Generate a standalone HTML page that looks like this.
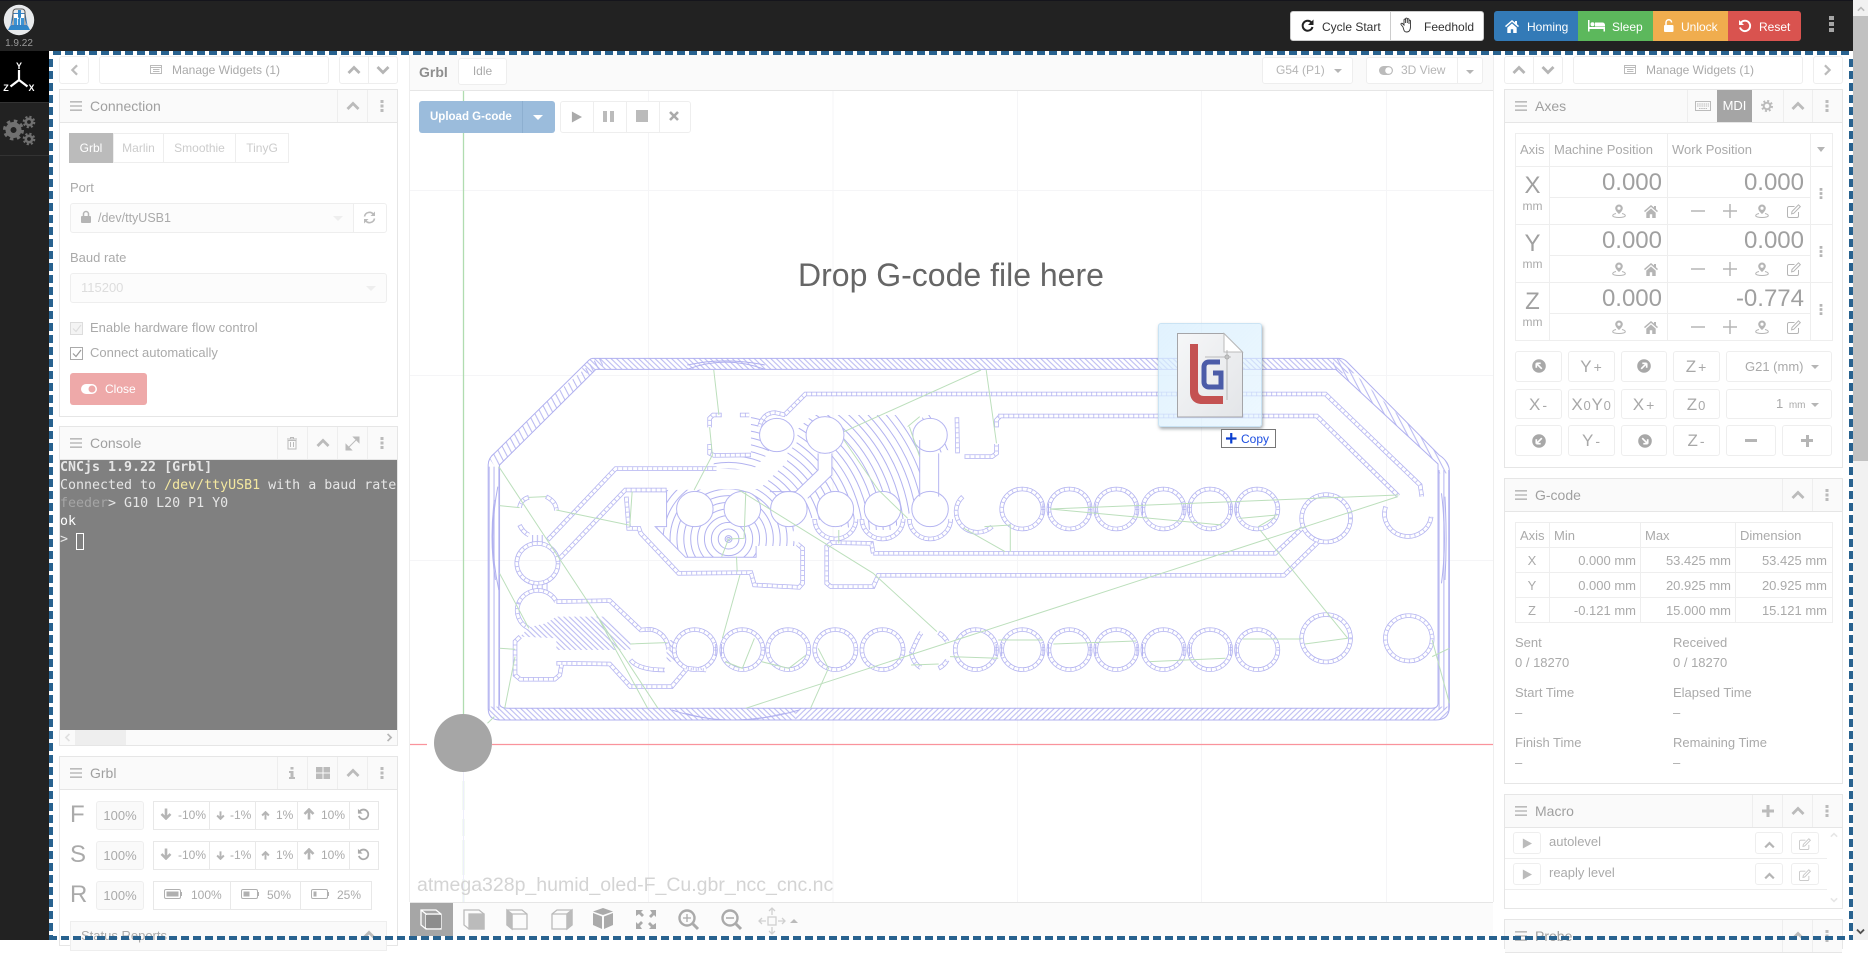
<!DOCTYPE html>
<html><head><meta charset="utf-8"><title>CNCjs</title>
<style>
html,body{margin:0;padding:0;width:1868px;height:940px;overflow:hidden;background:#fff;font:13px/16px "Liberation Sans",Arial,sans-serif;color:#aaa}
*{box-sizing:border-box}
.a{position:absolute}
.t{position:absolute;white-space:nowrap;line-height:16px;height:16px;transform:translateY(1px)}
.b{position:absolute;background:#fff;border:1px solid #eee;border-radius:3px;text-align:center;white-space:nowrap}
.w{position:absolute;border:1px solid #e6e6e6;background:#fff}
.h{position:absolute;left:0;right:0;top:0;height:33px;background:#fafafa;border-bottom:1px solid #e6e6e6}
.v{position:absolute;top:0;width:1px;height:32px;background:#eee}
.i{position:absolute;color:#b5b5b5;overflow:visible}
.l{position:absolute;background:#e9e9e9}
.ttl{position:absolute;left:30px;top:8px;font-size:14px;line-height:16px;color:#a0a0a0}
.ns,.ns *,#strips *,#pads *{vector-effect:non-scaling-stroke}
.st{fill:none}
.s1{stroke:#b2b2f0;stroke-width:4.500;fill:none}
.s2{stroke:#fff;stroke-width:3;fill:none}
.s3{stroke:#c4c4f4;stroke-width:3;fill:none;stroke-dasharray:1 4}
small{font-size:13px}
.term{position:absolute;left:60px;top:460px;width:337px;height:270px;background:#808080;overflow:hidden;font:13.3px/18px "DejaVu Sans Mono","Liberation Mono",monospace;color:#e6e6e6;white-space:pre}
.jt{font-size:17px;line-height:29px;color:#a8a8a8;letter-spacing:1px}
.jt i{font-style:normal;font-size:14px;margin-left:1px}
.cell{position:absolute;font-size:13px;line-height:16px;white-space:nowrap;color:#aaa;transform:translateY(1px)}
</style></head><body>
<svg width="0" height="0" style="position:absolute">
<defs>
<symbol id="up" viewBox="0 0 14 10"><path d="M1.500 8L7 2.500 12.500 8" fill="none" stroke="currentColor" stroke-width="2.800"/></symbol>
<symbol id="dn" viewBox="0 0 14 10"><path d="M1.500 2L7 7.500 12.500 2" fill="none" stroke="currentColor" stroke-width="2.800"/></symbol>
<symbol id="lf" viewBox="0 0 10 14"><path d="M8 1.500L2.500 7 8 12.500" fill="none" stroke="currentColor" stroke-width="2.600"/></symbol>
<symbol id="rt" viewBox="0 0 10 14"><path d="M2 1.500L7.500 7 2 12.500" fill="none" stroke="currentColor" stroke-width="2.600"/></symbol>
<symbol id="menu" viewBox="0 0 12 10"><path d="M0 0h12v1.600H0zM0 4.200h12v1.600H0zM0 8.400h12V10H0z" fill="currentColor"/></symbol>
<symbol id="dots" viewBox="0 0 4 12"><path d="M.5 0h3v3h-3zM.5 4.500h3v3h-3zM.5 9h3v3h-3z" fill="currentColor"/></symbol>
<symbol id="list" viewBox="0 0 12 9"><path d="M.5.5h11v8H.5z" fill="none" stroke="currentColor"/><path d="M.5 2.500h11M3 4.500h6.500M3 6.500h6.500" stroke="currentColor"/></symbol>
<symbol id="pin" viewBox="0 0 14 14"><path d="M7 .5a3.800 3.800 0 0 1 3.800 3.800C10.800 7 7 10 7 10S3.200 7 3.200 4.300A3.800 3.800 0 0 1 7 .5z" fill="currentColor"/><circle cx="7" cy="4.200" r="1.600" fill="#fff"/><path d="M4 9.500C1.800 10 .7 11 .7 11.700c0 1 2.800 1.800 6.300 1.800s6.300-.8 6.300-1.800c0-.7-1.100-1.700-3.300-2.200" fill="none" stroke="currentColor"/></symbol>
<symbol id="home" viewBox="0 0 14 13"><path d="M7 0L0 6l1 1.100 6-5.200 6 5.200L14 6l-2-1.800V1h-2v1.500zM2.300 7.600V13h3.500V9.200h2.400V13h3.500V7.600L7 3.500z" fill="currentColor"/></symbol>
<symbol id="edit" viewBox="0 0 14 14"><path d="M11 8v4a1.500 1.500 0 0 1-1.500 1.500h-8A1.500 1.500 0 0 1 0 12V4a1.500 1.500 0 0 1 1.500-1.500H7" fill="none" stroke="currentColor" transform="translate(.5 0)"/><path d="M5 7.500L11.500.8l1.800 1.800L6.700 9.300 4.600 9.800z" fill="none" stroke="currentColor"/></symbol>
<symbol id="cir" viewBox="0 0 14 14"><circle cx="7" cy="7" r="6.800" fill="currentColor"/><path d="M4.300 4.300h4.400M4.300 4.300v4.400M4.300 4.300l5.500 5.500" stroke="#fff" stroke-width="1.700" fill="none"/></symbol>
<symbol id="ad" viewBox="0 0 12 12"><path d="M6 .5v10M1.500 6L6 10.500 10.500 6" fill="none" stroke="currentColor" stroke-width="2.600"/></symbol>
<symbol id="au" viewBox="0 0 12 12"><path d="M6 11.500v-10M1.500 6L6 1.500 10.500 6" fill="none" stroke="currentColor" stroke-width="2.600"/></symbol>
<symbol id="undo" viewBox="0 0 14 14"><path d="M3 3.500A5.200 5.200 0 1 1 2 8.500" fill="none" stroke="currentColor" stroke-width="1.900"/><path d="M1 1v5h5z" fill="currentColor"/></symbol>
<symbol id="play" viewBox="0 0 12 12"><path d="M1 0l11 6-11 6z" fill="currentColor"/></symbol>
</defs>
</svg>

<!-- canvas -->
<svg class="a" style="left:0;top:0" width="1868" height="940">
<defs>
<pattern id="ha" width="16" height="16" patternUnits="userSpaceOnUse"><path d="M0 0L16 16M-16 0L16 32M0-16L32 16" stroke="#b8b8f1" stroke-width="3" fill="none"/></pattern>
<pattern id="hb" width="16" height="16" patternUnits="userSpaceOnUse"><path d="M16 0L0 16M32 0L0 32M16-16L-16 16" stroke="#b8b8f1" stroke-width="3" fill="none"/></pattern>
<pattern id="hc" width="18" height="36" patternUnits="userSpaceOnUse"><path d="M0 0L18 36M-18 0L18 72M18 0L36 36" stroke="#b8b8f1" stroke-width="3" fill="none"/></pattern>
<pattern id="hd" width="18" height="36" patternUnits="userSpaceOnUse"><path d="M0 0L18 36M-18 0L18 72M18 0L36 36" stroke="#b8b8f1" stroke-width="3" fill="none"/></pattern>
<pattern id="hv" width="14" height="60" patternUnits="userSpaceOnUse"><path d="M6 0V60" stroke="#b8b8f1" stroke-width="3" fill="none"/></pattern>
<clipPath id="band"><path clip-rule="evenodd" d="M530 55L2698 55Q2710 55 2720 65L2988 345Q3018 365 3018 395L3018 1100Q3018 1140 2978 1140L260 1140Q227 1140 227 1105L227 375Q227 355 245 340L520 60Q525 55 530 55ZM540 88L260 375L260 1090Q260 1105 285 1105L2965 1105Q2985 1105 2985 1090L2985 372L2688 88Z"/></clipPath>
<clipPath id="conc"><path d="M745 450L1015 447L1095 365L1095 340L1125 305L1125 268L1168 225L1410 225L1480 300L1480 258L1490 225L1590 225L1588 340L1560 330L1535 340L1535 470L1480 470L1460 510L1400 570L1340 570L1250 560L1190 540L1150 530L1120 560L1105 590L1110 600L1135 618L1005 618L1005 652L800 652L713 563L745 563ZM990 228L1025 232L1060 270L1040 340L995 390L880 385L885 348L990 345Z"/></clipPath>
<g id="strips">
<path d="M400 600L597 386L890 386"/>
<path d="M1088 224L1148 162L2658 162L2933 435L2938 470"/>
<path d="M1708 228L2633 228L2870 468"/>
<path d="M1345 640L2513 640L2590 565"/>
<path d="M1345 640L1340 610L1225 608L1210 620L1210 730L1222 740L1345 740L1360 706L2538 706L2638 605"/>
<path d="M435 655L625 450L745 450"/>
<path d="M628 470L635 565L665 565L670 580L780 700L990 698L1000 735L1130 742L1140 730L1140 625L1125 612"/>
<path d="M425 785L580 782L670 870L700 868"/>
<path d="M425 970L580 972L640 1040L760 1040L805 985L860 990"/>
<path d="M320 890L305 905L305 1005L320 1018L420 1018L435 1005L440 975"/>
<path d="M905 225L880 225L870 235L870 262M870 312L870 340L882 346L990 345M958 225L985 225"/>
<path d="M345 472C325 478 320 490 318 503M395 470C415 480 425 495 425 512M318 555C325 570 335 580 345 585"/>
<path d="M1588 232L1590 340M1610 350L1690 350L1703 340L1703 312M1703 262L1703 240L1712 230"/>
<path d="M1090 225L1060 218C1035 218 1020 235 1015 260"/>
<path d="M2833 500A68 68 0 1 0 2965 530"/>
<path d="M1175 537A60 60 0 0 0 1295 537M1312 537A60 60 0 0 0 1432 537M1450 537A60 60 0 0 0 1570 537"/>
<circle cx="2660" cy="535" r="71"/><circle cx="2660" cy="895" r="71"/><circle cx="2900" cy="895" r="68"/>
<circle cx="370" cy="670" r="60"/><path d="M315 790A60 60 0 0 0 345 865M315 790A60 60 0 0 1 425 785"/>
<circle cx="1778" cy="507" r="60"/><circle cx="1915" cy="507" r="60"/><circle cx="2051" cy="507" r="60"/><circle cx="2188" cy="507" r="60"/><circle cx="2323" cy="507" r="60"/><circle cx="2460" cy="507" r="60"/>
<path d="M1605 470A60 60 0 0 0 1690 560"/>
<circle cx="827" cy="929" r="60"/><circle cx="965" cy="929" r="60"/><circle cx="1098" cy="929" r="60"/><circle cx="1235" cy="929" r="60"/><circle cx="1372" cy="929" r="60"/><circle cx="1643" cy="929" r="60"/><circle cx="1778" cy="929" r="60"/><circle cx="1915" cy="929" r="60"/><circle cx="2051" cy="929" r="60"/><circle cx="2188" cy="929" r="60"/><circle cx="2323" cy="929" r="60"/><circle cx="2460" cy="929" r="60"/>
<path d="M690 868A60 60 0 0 1 750 929M640 960C660 985 700 990 740 990"/>
<path d="M1455 940C1465 915 1475 890 1485 878M1455 940C1462 965 1470 975 1483 983M1535 878C1545 885 1555 895 1560 905M1535 985C1545 980 1555 970 1560 960"/>
</g>
</defs>
<!-- grid -->
<g stroke="#f5f5f7" stroke-width="1">
<path d="M648.500 91V902M833 91V902M1017.500 91V902M1201.500 91V902M1386.500 91V902M409 190.500H1493M409 375.500H1493M409 560.500H1493"/>
</g>
<g stroke="#b0dcb0" stroke-width="1.300" fill="none"><path d="M463.500 91V714"/><path d="M463.500 781V810M463.500 819V836M463.500 840V875M463.500 879V902"/></g>
<path d="M463.500 772V902" stroke="#eeeefc" stroke-width="1"/>
<path d="M410 744.500H427M492 744.500H1493" stroke="#fa939c" stroke-width="1.300"/>
<g transform="translate(410 340) scale(.3444 .3333)">
 <g clip-path="url(#conc)" class="ns" fill="none" stroke="#b2b2f0" stroke-width="1">
  <circle cx="925" cy="597" r="10"/><circle cx="925" cy="597" r="30"/><circle cx="925" cy="597" r="50"/><circle cx="925" cy="597" r="70"/><circle cx="925" cy="597" r="90"/><circle cx="925" cy="597" r="110"/><circle cx="925" cy="597" r="130"/><circle cx="925" cy="597" r="150"/><circle cx="925" cy="597" r="170"/><circle cx="925" cy="597" r="190"/><circle cx="925" cy="597" r="210"/><circle cx="925" cy="597" r="230"/><circle cx="925" cy="597" r="250"/><circle cx="925" cy="597" r="270"/><circle cx="925" cy="597" r="290"/><circle cx="925" cy="597" r="310"/><circle cx="925" cy="597" r="330"/><circle cx="925" cy="597" r="350"/><circle cx="925" cy="597" r="370"/><circle cx="925" cy="597" r="390"/><circle cx="925" cy="597" r="410"/><circle cx="925" cy="597" r="430"/><circle cx="925" cy="597" r="450"/><circle cx="925" cy="597" r="470"/><circle cx="925" cy="597" r="490"/><circle cx="925" cy="597" r="510"/><circle cx="925" cy="597" r="530"/><circle cx="925" cy="597" r="550"/><circle cx="925" cy="597" r="570"/><circle cx="925" cy="597" r="590"/><circle cx="925" cy="597" r="610"/><circle cx="925" cy="597" r="630"/><circle cx="925" cy="597" r="650"/><circle cx="925" cy="597" r="670"/><circle cx="925" cy="597" r="690"/>
 </g>
 <path d="M425 830L565 830L640 905L640 930L425 930L425 895L320 890L345 862L395 850Z" fill="url(#ha)"/>
 <path d="M345 585h50v27h-50zM345 730h55v22h-55z" fill="url(#hv)"/>
 <path d="M745 900h30v65h-30z" fill="url(#ha)"/>
 <!-- white cut-outs -->
 <g class="ns" fill="#fff" stroke="#b6b6f1" stroke-width="1">
  <path d="M1185 340L1225 340L1225 405L1155 475L1150 490L1100 455L1120 455L1185 390Z" stroke="none"/>
  <path d="M1480 300h55v180h-55z" stroke="none"/>
  <circle cx="827" cy="507" r="53"/><circle cx="965" cy="507" r="53"/><circle cx="1100" cy="507" r="53"/><circle cx="1235" cy="507" r="53"/><circle cx="1372" cy="507" r="53"/><circle cx="1510" cy="507" r="53"/><circle cx="1205" cy="285" r="55"/><circle cx="1510" cy="285" r="50"/><circle cx="1065" cy="285" r="50"/>
  <circle cx="925" cy="597" r="5"/>
 </g>
 <path class="ns" d="M640 455H745V560H712L800 652H1005V618M1480 300V470M1535 340V470M1225 340V405L1155 475M1185 340V390L1120 455H1045M745 450V560" fill="none" stroke="#b6b6f1" stroke-width="1"/>
 <!-- board band -->
 <g clip-path="url(#band)">
  <rect x="500" y="40" width="2260" height="60" fill="url(#ha)"/>
  <path d="M220 340L560 40V100L260 400Z" fill="url(#hc)"/>
  <path d="M2680 40L3030 380V400L2970 400L2680 100Z" fill="url(#hd)"/>
  <rect x="220" y="380" width="45" height="730" fill="url(#hv)"/>
  <rect x="2975" y="390" width="50" height="720" fill="url(#hv)"/>
  <rect x="220" y="1100" width="900" height="45" fill="url(#ha)"/>
  <rect x="1120" y="1100" width="1900" height="45" fill="url(#hb)"/>
 </g>
 <g class="ns" fill="none" stroke="#b0b0ef" stroke-width="1">
  <path d="M530 55L2698 55Q2710 55 2720 65L2988 345Q3018 365 3018 395L3018 1100Q3018 1140 2978 1140L260 1140Q227 1140 227 1105L227 375Q227 355 245 340L520 60Q525 55 530 55Z"/>
  <path d="M540 88L260 375L260 1090Q260 1105 285 1105L2965 1105Q2985 1105 2985 1090L2985 372L2688 88Z"/>
  <path d="M805 88Q915 45 1030 88M805 75Q915 50 1030 75M760 1110Q930 1170 1130 1110M800 1120Q930 1160 1090 1120M255 440Q225 600 258 750M245 480Q230 600 248 720M2995 460Q3012 600 2995 730M3005 470Q3012 600 3005 720"/>
 </g>
 <!-- strips -->
 <g class="ns"><use href="#strips" class="s1"/><use href="#strips" class="s2"/><use href="#strips" class="s3"/></g>
 <path class="ns" fill="none" stroke="#b2b2f0" d="M1838 490v36M1854 490v36M1975 490v36M1991 490v36M2111 490v36M2127 490v36M2247 490v36M2263 490v36M2383 490v36M2399 490v36M888 912v36M904 912v36M1838 912v36M1854 912v36M1975 912v36M1991 912v36M2111 912v36M2127 912v36M2247 912v36M2263 912v36M2383 912v36M2399 912v36M1702 912v36M1718 912v36"/>
 <!-- moves -->
 <g class="ns" fill="none" stroke="#bcdfbc" stroke-width="1">
  <path d="M882 90L897 225M870 262L878 345L825 450M955 450L1345 700L1530 875M258 380L720 1105M550 840L690 1105M260 497L318 503M345 472L395 470M425 510L635 555M645 455L638 560M975 455L970 595L925 597L905 650M948 650L950 695M958 705L907 895M260 700L345 865M260 925L305 928M305 950L275 1105M640 912L745 908M1000 895L965 985L915 965M1020 965L1100 985L1150 945M1185 925L1215 985L1163 1105M975 1105L2868 470M1455 975L1535 972M1260 275L1658 90M1673 90L1703 310M1445 260L1480 230M1450 260L1480 350M1260 300L1360 450L1445 535M1245 570L1245 610M1858 507L2870 465M1858 507L2358 555M2518 525L2408 535M2513 530L2463 560M2468 570L2723 895M2598 912L2723 895M2418 897L2588 897M2148 965L2368 955M1868 912L2108 903M1708 900L1838 900M1568 950L1708 955M1668 560L1743 555L1743 635M1608 565L1728 635M2968 900L3018 1090M2968 950L3018 925M225 1150L245 1130"/>
 </g>
</g>
<circle cx="463" cy="743" r="29" fill="#a6a6a6"/>
</svg>

<!-- center header -->
<div class="a" style="left:409px;top:55px;width:1084px;height:36px;background:#fafafa;border-bottom:1px solid #e6e6e6"></div>
<div class="l" style="left:409px;top:55px;width:1px;height:847px;background:#eee"></div>
<div class="l" style="left:1493px;top:55px;width:1px;height:847px;background:#eee"></div>
<div class="t" style="left:419px;top:63px;font-weight:bold;font-size:14px;color:#8e8e8e">Grbl</div>
<div class="b" style="left:458px;top:58px;width:49px;height:27px;line-height:25px;font-size:12px;color:#aaa">Idle</div>
<div class="b" style="left:1262px;top:57px;width:91px;height:27px;line-height:25px;font-size:12px;color:#b5b5b5;text-align:left;padding-left:13px">G54 (P1)<span style="position:absolute;left:71px;top:11px;border:4px solid transparent;border-top:4px solid #b5b5b5"></span></div>
<div class="b" style="left:1366px;top:57px;width:92px;height:27px;line-height:25px;font-size:12px;color:#b5b5b5;text-align:left;padding-left:34px;border-radius:3px 0 0 3px">3D View<svg class="i" style="left:12px;top:8px;width:14px;height:9px;color:#bbb" viewBox="0 0 14 9"><rect width="14" height="9" rx="4.500" fill="currentColor"/><circle cx="9.500" cy="4.500" r="3.300" fill="#fff"/></svg></div>
<div class="b" style="left:1457px;top:57px;width:26px;height:27px;border-radius:0 3px 3px 0"><span style="position:absolute;left:8px;top:12px;border:4px solid transparent;border-top:4px solid #b5b5b5"></span></div>

<div class="a" style="left:419px;top:101px;width:136px;height:32px;background:#9bbcdc;border-radius:3px;color:#fff;font-weight:bold;font-size:11.500px;line-height:32px;padding-left:11px">Upload G-code<span style="position:absolute;left:103px;top:0;width:1px;height:32px;background:#8dafd0"></span><span style="position:absolute;left:114px;top:14px;border:5px solid transparent;border-top:5px solid #fff"></span></div>
<div class="b" style="left:560px;top:101px;width:131px;height:32px"></div>
<div class="l" style="left:593px;top:102px;width:1px;height:30px;background:#eee"></div><div class="l" style="left:626px;top:102px;width:1px;height:30px;background:#eee"></div><div class="l" style="left:659px;top:102px;width:1px;height:30px;background:#eee"></div>
<svg class="i" style="left:571px;top:111px;width:11px;height:12px;color:#aaa"><use href="#play"/></svg>
<div class="a" style="left:603px;top:111px;width:4px;height:11px;background:#bbb"></div><div class="a" style="left:610px;top:111px;width:4px;height:11px;background:#bbb"></div>
<div class="a" style="left:636px;top:110px;width:12px;height:12px;background:#bbb"></div>
<svg class="i" style="left:669px;top:111px;width:10px;height:10px;color:#aaa" viewBox="0 0 10 10"><path d="M1 1l8 8M9 1L1 9" stroke="currentColor" stroke-width="2.600"/></svg>

<div class="t" style="left:798px;top:254px;height:40px;line-height:40px;font-size:32px;color:#666">Drop G-code file here</div>
<div class="t" style="left:417px;top:871px;height:26px;line-height:26px;font-size:19.500px;color:#d4d4d4">atmega328p_humid_oled-F_Cu.gbr_ncc_cnc.nc</div>

<!-- center footer -->
<div class="a" style="left:410px;top:902px;width:1083px;height:34px;background:#fbfbfb;border-top:1px solid #e6e6e6"></div>
<div class="a" style="left:410px;top:903px;width:43px;height:33px;background:#a6a6a6"></div>
<svg class="a" style="left:410px;top:903px" width="400" height="33" fill="none">
 <g stroke="#fff" stroke-width="1.300"><path d="M11 7h15l5 4v15H16l-5-4zM16 11h15M16 11v15M11 7l5 4"/></g><rect x="16" y="12" width="15" height="13" fill="#8d8d8d"/>
 <g stroke="#bbb" stroke-width="1.300" fill="#bbb"><path d="M54 7h15l5 4v15H59l-5-4z" fill="none"/><rect x="59" y="11" width="15" height="15"/></g>
 <g stroke="#bbb" stroke-width="1.300"><path d="M97 7h15l5 4v15h-15l-5-4z"/><path d="M102 11h15M102 11v15"/><path d="M97 7l5 4v15l-5-4z" fill="#bbb"/></g>
 <g stroke="#bbb" stroke-width="1.300" transform="translate(-3 0)"><path d="M145 11l5-4h15v15l-5 4h-15z"/><path d="M145 11h15v15M160 11l5-4"/><path d="M160 11l5-4v15l-5 4z" fill="#bbb"/></g>
 <path d="M193 5l10 3.500-10 3.500-10-3.500z" fill="#aaa"/><path d="M183 10l9 3.500V26l-9-4zM194 13.500l9-3.500v12l-9 4z" fill="#aaa"/>
 <g fill="#aaa"><path d="M226 7h7l-2 2 3 3-2 2-3-3-3 2zM246 7v7l-2-2-3 3-2-2 3-3-2-3zM226 26v-7l2 2 3-3 2 2-3 3 2 3zM246 26h-7l2-2-3-3 2-2 3 3 3-2z"/></g>
 <g stroke="#aaa"><circle cx="277" cy="15" r="7.500" stroke-width="2.400"/><path d="M283 21l5 5" stroke-width="3"/><path d="M273 15h8M277 11v8" stroke-width="1.300"/><circle cx="320" cy="15" r="7.500" stroke-width="2.400"/><path d="M326 21l5 5" stroke-width="3"/><path d="M316 15h8" stroke-width="1.500"/></g>
 <g stroke="#d0d0d0" stroke-width="1.300"><rect x="358" y="14" width="8" height="8"/><path d="M362 12V5M359 8l3-3 3 3M362 24v7M359 28l3 3 3-3M356 18h-7M352 15l-3 3 3 3M368 18h7M372 15l3 3-3 3"/></g>
 <path d="M380 20l4-4 4 4z" fill="#bbb"/>
</svg>

<!-- left column -->
<div class="b" style="left:59px;top:56px;width:30px;height:28px"></div>
<svg class="i" style="left:70px;top:64px;width:9px;height:12px;color:#bbb"><use href="#lf"/></svg>
<div class="b" style="left:99px;top:56px;width:230px;height:28px;line-height:26px;font-size:12px;padding-left:24px">Manage Widgets (1)</div>
<svg class="i" style="left:150px;top:65px;width:12px;height:9px;color:#bbb"><use href="#list"/></svg>
<div class="b" style="left:339px;top:56px;width:59px;height:28px"></div><div class="l" style="left:368px;top:57px;width:1px;height:26px;background:#eee"></div>
<svg class="i" style="left:347px;top:65px;width:14px;height:10px"><use href="#up"/></svg><svg class="i" style="left:376px;top:65px;width:14px;height:10px"><use href="#dn"/></svg>

<!-- connection -->
<div class="w" style="left:59px;top:89px;width:339px;height:328px">
 <div class="h"></div><div class="v" style="left:277px"></div><div class="v" style="left:307px"></div>
 <svg class="i" style="left:10px;top:11px;width:12px;height:10px;color:#bbb"><use href="#menu"/></svg><div class="ttl">Connection</div>
 <svg class="i" style="left:286px;top:11px;width:14px;height:10px;color:#bbb"><use href="#up"/></svg><svg class="i" style="left:320px;top:10px;width:4px;height:12px;color:#bbb"><use href="#dots"/></svg>
</div>
<div class="a" style="left:69px;top:133px;width:44px;height:30px;background:#bbb;color:#fff;font-size:12px;line-height:30px;text-align:center">Grbl</div>
<div class="a" style="left:113px;top:133px;width:51px;height:30px;border:1px solid #eee;font-size:12px;line-height:28px;text-align:center;color:#ccc">Marlin</div>
<div class="a" style="left:164px;top:133px;width:72px;height:30px;border:1px solid #eee;border-left:0;font-size:12px;line-height:28px;text-align:center;color:#ccc">Smoothie</div>
<div class="a" style="left:235px;top:133px;width:54px;height:30px;border:1px solid #eee;font-size:12px;line-height:28px;text-align:center;color:#ccc">TinyG</div>
<div class="t" style="left:70px;top:179px;color:#aaa">Port</div>
<div class="a" style="left:70px;top:203px;width:284px;height:30px;border:1px solid #eee;border-radius:3px 0 0 3px;background:#fcfcfc"></div>
<svg class="i" style="left:81px;top:211px;width:10px;height:12px;color:#b5b5b5" viewBox="0 0 10 12"><path d="M2.500 5V3a2.500 2.500 0 0 1 5 0v2" fill="none" stroke="currentColor" stroke-width="1.500"/><rect y="5" width="10" height="7" rx="1" fill="currentColor"/></svg>
<div class="t" style="left:98px;top:209px;font-size:12.500px;color:#aaa">/dev/ttyUSB1</div>
<span class="a" style="left:333px;top:216px;border:5px solid transparent;border-top:5px solid #eee"></span>
<div class="b" style="left:353px;top:203px;width:34px;height:30px;border-radius:0 3px 3px 0"></div>
<svg class="i" style="left:363px;top:211px;width:13px;height:13px;color:#bbb" viewBox="0 0 13 13"><path d="M1.500 5.500A5 5 0 0 1 10.500 3.500M11.500 7.500A5 5 0 0 1 2.500 9.500" fill="none" stroke="currentColor" stroke-width="1.600"/><path d="M12 .5v4.500H7.500zM1 12.500V8h4.500z" fill="currentColor"/></svg>
<div class="t" style="left:70px;top:249px;color:#aaa">Baud rate</div>
<div class="a" style="left:70px;top:273px;width:317px;height:30px;border:1px solid #eee;border-radius:3px;background:#fcfcfc"></div>
<div class="t" style="left:81px;top:279px;color:#ddd">115200</div>
<span class="a" style="left:366px;top:286px;border:5px solid transparent;border-top:5px solid #eee"></span>
<svg class="a" style="left:70px;top:322px" width="14" height="40" viewBox="0 0 14 40" fill="none"><rect x=".5" y=".5" width="12" height="12" stroke="#ddd" fill="#f4f4f4"/><path d="M3 6.500l3 3 5-6.500" stroke="#ddd" stroke-width="1.200"/><rect x=".5" y="25.500" width="12" height="12" stroke="#aaa" fill="#fff"/><path d="M3 31.500l3 3 5-6.500" stroke="#999" stroke-width="1.200"/></svg>
<div class="t" style="left:90px;top:319px">Enable hardware flow control</div>
<div class="t" style="left:90px;top:344px">Connect automatically</div>
<div class="a" style="left:70px;top:373px;width:77px;height:32px;background:#eea9a9;border-radius:3px;color:#fff;font-size:12px;line-height:32px;padding-left:35px">Close<svg class="i" style="left:11px;top:11px;width:16px;height:10px;color:#fff" viewBox="0 0 16 10"><rect width="16" height="10" rx="5" fill="currentColor"/><circle cx="11" cy="5" r="3.500" fill="#eea9a9"/></svg></div>

<!-- console -->
<div class="w" style="left:59px;top:426px;width:339px;height:320px">
 <div class="h"></div><div class="v" style="left:217px"></div><div class="v" style="left:247px"></div><div class="v" style="left:277px"></div><div class="v" style="left:307px"></div>
 <svg class="i" style="left:10px;top:11px;width:12px;height:10px;color:#bbb"><use href="#menu"/></svg><div class="ttl">Console</div>
 <svg class="i" style="left:227px;top:10px;width:10px;height:12px;color:#bbb" viewBox="0 0 10 12"><path d="M0 2h10M3.500 2V.5h3V2M1 3.500h8V12H1zM3.500 5v5M6.500 5v5" stroke="currentColor" fill="none"/></svg>
 <svg class="i" style="left:256px;top:11px;width:14px;height:10px;color:#bbb"><use href="#up"/></svg>
 <svg class="i" style="left:286px;top:10px;width:13px;height:13px;color:#bbb" viewBox="0 0 13 13"><path d="M7.500 0H13v5.500zM0 7.500V13h5.500zM3 10l7-7" stroke="currentColor" fill="currentColor"/></svg>
 <svg class="i" style="left:320px;top:10px;width:4px;height:12px;color:#bbb"><use href="#dots"/></svg>
</div>
<div class="term"><div style="font-weight:bold;margin-top:-1px">CNCjs 1.9.22 [Grbl]</div><div>Connected to <span style="color:#f4e8a0">/dev/ttyUSB1</span> with a baud rate of</div><div><span style="color:#a5a5a5">feeder</span>&gt; G10 L20 P1 Y0</div><div style="color:#fff">ok</div><div>&gt; </div><span style="position:absolute;left:16px;top:73px;width:8px;height:17px;border:1px solid #fff"></span></div>
<div class="a" style="left:60px;top:730px;width:337px;height:15px;background:#fafafa"></div>
<div class="a" style="left:75px;top:730px;width:51px;height:15px;background:#eee"></div>
<svg class="i" style="left:64px;top:733px;width:7px;height:9px;color:#e0e0e0"><use href="#lf"/></svg><svg class="i" style="left:386px;top:733px;width:7px;height:9px;color:#b5b5b5"><use href="#rt"/></svg>

<!-- grbl widget -->
<div class="w" style="left:59px;top:756px;width:339px;height:190px">
 <div class="h"></div><div class="v" style="left:217px"></div><div class="v" style="left:247px"></div><div class="v" style="left:277px"></div><div class="v" style="left:307px"></div>
 <svg class="i" style="left:10px;top:11px;width:12px;height:10px;color:#bbb"><use href="#menu"/></svg><div class="ttl">Grbl</div>
 <svg class="i" style="left:229px;top:10px;width:6px;height:12px;color:#bbb" viewBox="0 0 6 12"><path d="M1.500 0h3v2.500h-3zM0 4h4.500v6H6v2H0v-2h1.500V6H0z" fill="currentColor"/></svg>
 <svg class="i" style="left:256px;top:10px;width:14px;height:12px;color:#bbb" viewBox="0 0 14 12"><path d="M0 0h6.500v5.500H0zM7.500 0H14v5.500H7.500zM0 6.500h6.500V12H0zM7.500 6.500H14V12H7.500z" fill="currentColor"/></svg>
 <svg class="i" style="left:286px;top:11px;width:14px;height:10px;color:#bbb"><use href="#up"/></svg><svg class="i" style="left:320px;top:10px;width:4px;height:12px;color:#bbb"><use href="#dots"/></svg>
</div>
<div class="t" style="left:70px;top:800px;height:28px;line-height:28px;font-size:24px;color:#aaa">F</div>
<div class="t" style="left:70px;top:840px;height:28px;line-height:28px;font-size:24px;color:#aaa">S</div>
<div class="t" style="left:70px;top:880px;height:28px;line-height:28px;font-size:24px;color:#aaa">R</div>
<div class="b" style="left:96px;top:801px;width:48px;height:29px;line-height:28px;background:#fafafa">100%</div>
<div class="b" style="left:96px;top:841px;width:48px;height:29px;line-height:28px;background:#fafafa">100%</div>
<div class="b" style="left:96px;top:881px;width:48px;height:29px;line-height:28px;background:#fafafa">100%</div>
<!-- F row -->
<div class="a" style="left:153px;top:801px;width:226px;height:29px;border:1px solid #e8e8e8"></div>
<div class="a" style="left:153px;top:841px;width:226px;height:29px;border:1px solid #e8e8e8"></div>
<div class="l" style="left:209px;top:801px;width:1px;height:29px"></div><div class="l" style="left:255px;top:801px;width:1px;height:29px"></div><div class="l" style="left:297px;top:801px;width:1px;height:29px"></div><div class="l" style="left:349px;top:801px;width:1px;height:29px"></div>
<div class="l" style="left:209px;top:841px;width:1px;height:29px"></div><div class="l" style="left:255px;top:841px;width:1px;height:29px"></div><div class="l" style="left:297px;top:841px;width:1px;height:29px"></div><div class="l" style="left:349px;top:841px;width:1px;height:29px"></div>
<svg class="i" style="left:160px;top:808px;width:12px;height:12px"><use href="#ad"/></svg><div class="t" style="left:178px;top:806px;font-size:12px">-10%</div>
<svg class="i" style="left:216px;top:811px;width:9px;height:9px"><use href="#ad"/></svg><div class="t" style="left:230px;top:806px;font-size:12px">-1%</div>
<svg class="i" style="left:261px;top:811px;width:9px;height:9px"><use href="#au"/></svg><div class="t" style="left:276px;top:806px;font-size:12px">1%</div>
<svg class="i" style="left:303px;top:808px;width:12px;height:12px"><use href="#au"/></svg><div class="t" style="left:321px;top:806px;font-size:12px">10%</div>
<svg class="i" style="left:357px;top:808px;width:13px;height:13px;color:#aaa"><use href="#undo"/></svg>
<svg class="i" style="left:160px;top:848px;width:12px;height:12px"><use href="#ad"/></svg><div class="t" style="left:178px;top:846px;font-size:12px">-10%</div>
<svg class="i" style="left:216px;top:851px;width:9px;height:9px"><use href="#ad"/></svg><div class="t" style="left:230px;top:846px;font-size:12px">-1%</div>
<svg class="i" style="left:261px;top:851px;width:9px;height:9px"><use href="#au"/></svg><div class="t" style="left:276px;top:846px;font-size:12px">1%</div>
<svg class="i" style="left:303px;top:848px;width:12px;height:12px"><use href="#au"/></svg><div class="t" style="left:321px;top:846px;font-size:12px">10%</div>
<svg class="i" style="left:357px;top:848px;width:13px;height:13px;color:#aaa"><use href="#undo"/></svg>
<!-- R row -->
<div class="a" style="left:153px;top:881px;width:219px;height:29px;border:1px solid #e8e8e8"></div>
<div class="l" style="left:230px;top:881px;width:1px;height:29px"></div><div class="l" style="left:300px;top:881px;width:1px;height:29px"></div>
<svg class="a" style="left:164px;top:889px" width="200" height="12" fill="none"><g stroke="#b0b0b0"><rect x=".5" y=".5" width="16" height="9" rx="1.500"/><rect x="77.500" y=".5" width="16" height="9" rx="1.500"/><rect x="147.500" y=".5" width="16" height="9" rx="1.500"/></g><g fill="#b0b0b0"><rect x="2.500" y="2.500" width="12" height="5"/><rect x="79.500" y="2.500" width="6" height="5"/><rect x="149.500" y="2.500" width="3" height="5"/><rect x="17" y="3" width="1" height="4"/><rect x="94" y="3" width="1" height="4"/><rect x="164" y="3" width="1" height="4"/></g></svg>
<div class="t" style="left:191px;top:886px;font-size:12px">100%</div><div class="t" style="left:267px;top:886px;font-size:12px">50%</div><div class="t" style="left:337px;top:886px;font-size:12px">25%</div>
<div class="a" style="left:70px;top:921px;width:317px;height:30px;border:1px solid #eee;background:#fafafa"></div>
<div class="t" style="left:81px;top:927px;color:#aaa">Status Reports</div>
<svg class="i" style="left:362px;top:930px;width:14px;height:10px;color:#bbb"><use href="#up"/></svg>

<!-- right column -->
<div class="b" style="left:1504px;top:56px;width:59px;height:28px"></div><div class="l" style="left:1533px;top:57px;width:1px;height:26px;background:#eee"></div>
<svg class="i" style="left:1512px;top:65px;width:14px;height:10px"><use href="#up"/></svg><svg class="i" style="left:1541px;top:65px;width:14px;height:10px"><use href="#dn"/></svg>
<div class="b" style="left:1573px;top:56px;width:230px;height:28px;line-height:26px;font-size:12px;padding-left:24px">Manage Widgets (1)</div>
<svg class="i" style="left:1624px;top:65px;width:12px;height:9px;color:#bbb"><use href="#list"/></svg>
<div class="b" style="left:1813px;top:56px;width:30px;height:28px"></div>
<svg class="i" style="left:1823px;top:64px;width:9px;height:12px;color:#bbb"><use href="#rt"/></svg>

<!-- axes -->
<div class="w" style="left:1504px;top:89px;width:339px;height:379px">
 <div class="h"></div><div class="v" style="left:182px"></div><div class="v" style="left:278px"></div><div class="v" style="left:307px"></div>
 <svg class="i" style="left:10px;top:11px;width:12px;height:10px;color:#bbb"><use href="#menu"/></svg><div class="ttl">Axes</div>
 <svg class="i" style="left:190px;top:11px;width:16px;height:10px;color:#bbb" viewBox="0 0 16 10"><rect x=".5" y=".5" width="15" height="9" fill="none" stroke="currentColor"/><path d="M2 3h12M2 5h12M4 7.500h8" stroke="currentColor" stroke-dasharray="1.500 .7"/></svg>
 <div class="a" style="left:212px;top:0;width:35px;height:32px;background:#a5a5a5;color:#fff;font-size:13px;line-height:32px;text-align:center">MDI</div>
 <svg class="i" style="left:256px;top:10px;width:12px;height:12px;color:#bbb" viewBox="0 0 12 12"><circle cx="6" cy="6" r="3.300" fill="none" stroke="currentColor" stroke-width="2"/><circle cx="6" cy="6" r="5" fill="none" stroke="currentColor" stroke-width="2" stroke-dasharray="2 1.930"/></svg>
 <svg class="i" style="left:286px;top:11px;width:14px;height:10px;color:#bbb"><use href="#up"/></svg><svg class="i" style="left:320px;top:10px;width:4px;height:12px;color:#bbb"><use href="#dots"/></svg>
</div>
<div class="a" style="left:1515px;top:133px;width:318px;height:208px;border:1px solid #eee"></div>
<div class="l" style="left:1549px;top:133px;width:1px;height:207px;background:#eee"></div><div class="l" style="left:1667px;top:133px;width:1px;height:207px;background:#eee"></div><div class="l" style="left:1810px;top:133px;width:1px;height:207px;background:#eee"></div>
<div class="l" style="left:1515px;top:166px;width:318px;height:1px;background:#eee"></div><div class="l" style="left:1515px;top:224px;width:318px;height:1px;background:#eee"></div><div class="l" style="left:1515px;top:282px;width:318px;height:1px;background:#eee"></div>
<div class="l" style="left:1549px;top:197px;width:261px;height:1px;background:#eee"></div><div class="l" style="left:1549px;top:255px;width:261px;height:1px;background:#eee"></div><div class="l" style="left:1549px;top:313px;width:261px;height:1px;background:#eee"></div>
<div class="cell" style="left:1520px;top:141px">Axis</div><div class="cell" style="left:1554px;top:141px">Machine Position</div><div class="cell" style="left:1672px;top:141px">Work Position</div>
<span class="a" style="left:1817px;top:147px;border:4px solid transparent;border-top:5px solid #b5b5b5"></span>

<div class="t" style="left:1522px;top:171px;width:21px;height:28px;line-height:28px;font-size:24px;text-align:center;color:#a0a0a0">X</div><div class="t" style="left:1522px;top:197px;width:21px;text-align:center;font-size:12px">mm</div>
<div class="t" style="left:1522px;top:229px;width:21px;height:28px;line-height:28px;font-size:24px;text-align:center;color:#a0a0a0">Y</div><div class="t" style="left:1522px;top:255px;width:21px;text-align:center;font-size:12px">mm</div>
<div class="t" style="left:1522px;top:287px;width:21px;height:28px;line-height:28px;font-size:24px;text-align:center;color:#a0a0a0">Z</div><div class="t" style="left:1522px;top:313px;width:21px;text-align:center;font-size:12px">mm</div>

<div class="t" style="right:206px;top:168px;height:28px;line-height:28px;font-size:24px;color:#a0a0a0">0.000</div><div class="t" style="right:64px;top:168px;height:28px;line-height:28px;font-size:24px;color:#a0a0a0">0.000</div>
<div class="t" style="right:206px;top:226px;height:28px;line-height:28px;font-size:24px;color:#a0a0a0">0.000</div><div class="t" style="right:64px;top:226px;height:28px;line-height:28px;font-size:24px;color:#a0a0a0">0.000</div>
<div class="t" style="right:206px;top:284px;height:28px;line-height:28px;font-size:24px;color:#a0a0a0">0.000</div><div class="t" style="right:64px;top:284px;height:28px;line-height:28px;font-size:24px;color:#a0a0a0">-0.774</div>

<svg class="i" style="left:1612px;top:204px;width:14px;height:14px"><use href="#pin"/></svg><svg class="i" style="left:1644px;top:205px;width:14px;height:13px"><use href="#home"/></svg>
<svg class="i" style="left:1691px;top:204px;width:46px;height:14px" viewBox="0 0 46 14"><path d="M0 7h14M32 7h14M39 0v14" stroke="currentColor" stroke-width="1.500"/></svg>
<svg class="i" style="left:1755px;top:204px;width:14px;height:14px"><use href="#pin"/></svg><svg class="i" style="left:1787px;top:204px;width:14px;height:14px"><use href="#edit"/></svg>
<svg class="i" style="left:1819px;top:188px;width:4px;height:11px"><use href="#dots"/></svg>

<svg class="i" style="left:1612px;top:262px;width:14px;height:14px"><use href="#pin"/></svg><svg class="i" style="left:1644px;top:263px;width:14px;height:13px"><use href="#home"/></svg>
<svg class="i" style="left:1691px;top:262px;width:46px;height:14px" viewBox="0 0 46 14"><path d="M0 7h14M32 7h14M39 0v14" stroke="currentColor" stroke-width="1.500"/></svg>
<svg class="i" style="left:1755px;top:262px;width:14px;height:14px"><use href="#pin"/></svg><svg class="i" style="left:1787px;top:262px;width:14px;height:14px"><use href="#edit"/></svg>
<svg class="i" style="left:1819px;top:246px;width:4px;height:11px"><use href="#dots"/></svg>

<svg class="i" style="left:1612px;top:320px;width:14px;height:14px"><use href="#pin"/></svg><svg class="i" style="left:1644px;top:321px;width:14px;height:13px"><use href="#home"/></svg>
<svg class="i" style="left:1691px;top:320px;width:46px;height:14px" viewBox="0 0 46 14"><path d="M0 7h14M32 7h14M39 0v14" stroke="currentColor" stroke-width="1.500"/></svg>
<svg class="i" style="left:1755px;top:320px;width:14px;height:14px"><use href="#pin"/></svg><svg class="i" style="left:1787px;top:320px;width:14px;height:14px"><use href="#edit"/></svg>
<svg class="i" style="left:1819px;top:304px;width:4px;height:11px"><use href="#dots"/></svg>

<!-- jog -->
<div class="b jt" style="left:1515px;top:351px;width:47px;height:31px"></div>
<svg class="i" style="left:1532px;top:359px;width:14px;height:14px;color:#a8a8a8"><use href="#cir"/></svg>
<div class="b jt" style="left:1568px;top:351px;width:47px;height:31px">Y<i>+</i></div>
<div class="b jt" style="left:1621px;top:351px;width:46px;height:31px"></div>
<svg class="i" style="left:1637px;top:359px;width:14px;height:14px;color:#a8a8a8;transform:rotate(90deg)"><use href="#cir"/></svg>
<div class="b jt" style="left:1673px;top:351px;width:47px;height:31px">Z<i>+</i></div>
<div class="b" style="left:1726px;top:351px;width:106px;height:31px;line-height:29px;text-align:left;padding-left:18px;color:#aaa">G21 (mm)<span style="position:absolute;left:84px;top:13px;border:4px solid transparent;border-top:4px solid #b5b5b5"></span></div>
<div class="b jt" style="left:1515px;top:389px;width:47px;height:30px">X<i>-</i></div>
<div class="b jt" style="left:1568px;top:389px;width:47px;height:30px;letter-spacing:.8px">X<small>0</small>Y<small>0</small></div>
<div class="b jt" style="left:1621px;top:389px;width:46px;height:30px">X<i>+</i></div>
<div class="b jt" style="left:1673px;top:389px;width:47px;height:30px">Z<small>0</small></div>
<div class="b" style="left:1726px;top:389px;width:106px;height:30px;line-height:28px;color:#aaa;text-align:left;padding-left:49px">1 <span style="font-size:10px;margin-left:2px">mm</span><span style="position:absolute;left:84px;top:13px;border:4px solid transparent;border-top:4px solid #b5b5b5"></span></div>
<div class="b jt" style="left:1515px;top:425px;width:47px;height:31px"></div>
<svg class="i" style="left:1532px;top:434px;width:14px;height:14px;color:#a8a8a8;transform:rotate(-90deg)"><use href="#cir"/></svg>
<div class="b jt" style="left:1568px;top:425px;width:47px;height:31px">Y<i>-</i></div>
<div class="b jt" style="left:1621px;top:425px;width:46px;height:31px"></div>
<svg class="i" style="left:1638px;top:434px;width:14px;height:14px;color:#a8a8a8;transform:rotate(180deg)"><use href="#cir"/></svg>
<div class="b jt" style="left:1673px;top:425px;width:47px;height:31px">Z<i>-</i></div>
<div class="b" style="left:1726px;top:425px;width:50px;height:31px"><span style="position:absolute;left:18px;top:13px;width:12px;height:3px;background:#b5b5b5"></span></div>
<div class="b" style="left:1782px;top:425px;width:50px;height:31px"><span style="position:absolute;left:18px;top:13px;width:12px;height:3px;background:#b5b5b5"></span><span style="position:absolute;left:22.500px;top:8.500px;width:3px;height:12px;background:#b5b5b5"></span></div>

<!-- g-code -->
<div class="w" style="left:1504px;top:478px;width:339px;height:306px">
 <div class="h"></div><div class="v" style="left:277px"></div><div class="v" style="left:307px"></div>
 <svg class="i" style="left:10px;top:11px;width:12px;height:10px;color:#bbb"><use href="#menu"/></svg><div class="ttl">G-code</div>
 <svg class="i" style="left:286px;top:11px;width:14px;height:10px;color:#bbb"><use href="#up"/></svg><svg class="i" style="left:320px;top:10px;width:4px;height:12px;color:#bbb"><use href="#dots"/></svg>
</div>
<div class="a" style="left:1515px;top:522px;width:318px;height:101px;border:1px solid #eee"></div>
<div class="l" style="left:1549px;top:522px;width:1px;height:100px;background:#eee"></div><div class="l" style="left:1640px;top:522px;width:1px;height:100px;background:#eee"></div><div class="l" style="left:1735px;top:522px;width:1px;height:100px;background:#eee"></div>
<div class="l" style="left:1515px;top:547px;width:318px;height:1px;background:#eee"></div><div class="l" style="left:1515px;top:572px;width:318px;height:1px;background:#eee"></div><div class="l" style="left:1515px;top:597px;width:318px;height:1px;background:#eee"></div>
<div class="cell" style="left:1520px;top:527px">Axis</div><div class="cell" style="left:1554px;top:527px">Min</div><div class="cell" style="left:1645px;top:527px">Max</div><div class="cell" style="left:1740px;top:527px">Dimension</div>
<div class="cell" style="left:1515px;width:34px;text-align:center;top:552px">X</div><div class="cell" style="right:232px;top:552px">0.000 mm</div><div class="cell" style="right:137px;top:552px">53.425 mm</div><div class="cell" style="right:41px;top:552px">53.425 mm</div>
<div class="cell" style="left:1515px;width:34px;text-align:center;top:577px">Y</div><div class="cell" style="right:232px;top:577px">0.000 mm</div><div class="cell" style="right:137px;top:577px">20.925 mm</div><div class="cell" style="right:41px;top:577px">20.925 mm</div>
<div class="cell" style="left:1515px;width:34px;text-align:center;top:602px">Z</div><div class="cell" style="right:232px;top:602px">-0.121 mm</div><div class="cell" style="right:137px;top:602px">15.000 mm</div><div class="cell" style="right:41px;top:602px">15.121 mm</div>
<div class="cell" style="left:1515px;top:634px">Sent</div><div class="cell" style="left:1673px;top:634px">Received</div>
<div class="cell" style="left:1515px;top:654px">0 / 18270</div><div class="cell" style="left:1673px;top:654px">0 / 18270</div>
<div class="cell" style="left:1515px;top:684px">Start Time</div><div class="cell" style="left:1673px;top:684px">Elapsed Time</div>
<div class="cell" style="left:1515px;top:704px">–</div><div class="cell" style="left:1673px;top:704px">–</div>
<div class="cell" style="left:1515px;top:734px">Finish Time</div><div class="cell" style="left:1673px;top:734px">Remaining Time</div>
<div class="cell" style="left:1515px;top:754px">–</div><div class="cell" style="left:1673px;top:754px">–</div>

<!-- macro -->
<div class="w" style="left:1504px;top:794px;width:339px;height:115px">
 <div class="h"></div><div class="v" style="left:247px"></div><div class="v" style="left:277px"></div><div class="v" style="left:307px"></div>
 <svg class="i" style="left:10px;top:11px;width:12px;height:10px;color:#bbb"><use href="#menu"/></svg><div class="ttl">Macro</div>
 <svg class="i" style="left:257px;top:10px;width:12px;height:12px;color:#bbb" viewBox="0 0 12 12"><path d="M0 6h12M6 0v12" stroke="currentColor" stroke-width="3"/></svg>
 <svg class="i" style="left:286px;top:11px;width:14px;height:10px;color:#bbb"><use href="#up"/></svg><svg class="i" style="left:320px;top:10px;width:4px;height:12px;color:#bbb"><use href="#dots"/></svg>
</div>
<div class="l" style="left:1505px;top:858px;width:322px;height:1px;background:#eee"></div><div class="l" style="left:1505px;top:889px;width:322px;height:1px;background:#eee"></div>
<div class="b" style="left:1513px;top:832px;width:28px;height:22px"></div><svg class="i" style="left:1522px;top:838px;width:10px;height:11px;color:#bbb"><use href="#play"/></svg>
<div class="cell" style="left:1549px;top:833px">autolevel</div>
<div class="b" style="left:1755px;top:832px;width:28px;height:22px"></div><svg class="i" style="left:1764px;top:841px;width:11px;height:8px"><use href="#up"/></svg>
<div class="b" style="left:1791px;top:832px;width:28px;height:22px"></div><svg class="i" style="left:1799px;top:838px;width:12px;height:12px;color:#c5c5c5"><use href="#edit"/></svg>
<div class="b" style="left:1513px;top:863px;width:28px;height:22px"></div><svg class="i" style="left:1522px;top:869px;width:10px;height:11px;color:#bbb"><use href="#play"/></svg>
<div class="cell" style="left:1549px;top:864px">reaply level</div>
<div class="b" style="left:1755px;top:863px;width:28px;height:22px"></div><svg class="i" style="left:1764px;top:872px;width:11px;height:8px"><use href="#up"/></svg>
<div class="b" style="left:1791px;top:863px;width:28px;height:22px"></div><svg class="i" style="left:1799px;top:869px;width:12px;height:12px;color:#c5c5c5"><use href="#edit"/></svg>
<svg class="i" style="left:1830px;top:832px;width:8px;height:6px;color:#e6e6e6"><use href="#up"/></svg><svg class="i" style="left:1830px;top:897px;width:8px;height:6px;color:#e6e6e6"><use href="#dn"/></svg>

<!-- probe -->
<div class="w" style="left:1504px;top:919px;width:339px;height:30px">
 <div class="h"></div><div class="v" style="left:277px"></div><div class="v" style="left:307px"></div>
 <svg class="i" style="left:10px;top:11px;width:12px;height:10px;color:#bbb"><use href="#menu"/></svg><div class="ttl">Probe</div>
 <svg class="i" style="left:286px;top:11px;width:14px;height:10px;color:#bbb"><use href="#up"/></svg><svg class="i" style="left:320px;top:10px;width:4px;height:12px;color:#bbb"><use href="#dots"/></svg>
</div>

<!-- top bar + sidebar -->
<div class="a" style="left:0;top:0;width:1853px;height:51px;background:#222;border-top:1px solid #15151c"></div>
<div class="a" style="left:0;top:51px;width:49px;height:889px;background:#222"></div>
<div class="a" style="left:0;top:51px;width:49px;height:52px;background:#000;border-bottom:1px solid #333"></div>
<div class="a" style="left:0;top:103px;width:49px;height:53px;border-bottom:1px solid #333"></div>
<svg class="a" style="left:3px;top:4px" width="32" height="32" viewBox="0 0 32 32"><circle cx="16" cy="16" r="15.200" fill="#e8eaec"/><path d="M8 21.500L10 9.500h12L24 21.500z" fill="#fff" stroke="#3a7fc0"/><path d="M7 22h18l2 4H5z" fill="#2f86c9"/><path d="M10 21V8a3 3 0 0 1 3-3h6a3 3 0 0 1 3 3v13" fill="none" stroke="#555" stroke-width="1"/><path d="M15 6h3v7l-1.500 3-1.500-3z" fill="#2f86c9"/><path d="M11 14h3v7h-3zM18 14h3v7h-3zM14.800 15h2.400v6h-2.400z" fill="#3c93d4"/></svg>
<div class="t" style="left:0;top:35px;width:38px;text-align:center;font-size:10px;color:#9a9a9a">1.9.22</div>
<svg class="a" style="left:0;top:51px" width="49" height="52" fill="#fff"><path d="M19 19v10M19 29l-8.500 6.500M19 29l8.500 6.500" stroke="#fff" stroke-width="2.200" fill="none"/><text x="19" y="18" font-family="Liberation Sans" font-size="9" font-weight="bold" text-anchor="middle">Y</text><text x="6" y="40" font-family="Liberation Sans" font-size="9" font-weight="bold" text-anchor="middle">Z</text><text x="31.500" y="40" font-family="Liberation Sans" font-size="9" font-weight="bold" text-anchor="middle">X</text></svg>
<svg class="a" style="left:0;top:103px" width="49" height="53" fill="none" stroke="#707070"><circle cx="13.500" cy="27" r="5.500" stroke-width="5"/><circle cx="13.500" cy="27" r="9" stroke-width="3" stroke-dasharray="3.500 3.570"/><circle cx="29" cy="19" r="3.200" stroke-width="2.600"/><circle cx="29" cy="19" r="5.300" stroke-width="2" stroke-dasharray="2.200 2"/><circle cx="29" cy="36" r="3.200" stroke-width="2.600"/><circle cx="29" cy="36" r="5.300" stroke-width="2" stroke-dasharray="2.200 2"/></svg>

<!-- top buttons -->
<div class="a" style="left:1290px;top:11px;width:194px;height:30px;background:#fff;border:1px solid #ccc;border-radius:3px"></div>
<div class="l" style="left:1390px;top:12px;width:1px;height:28px;background:#ccc"></div>
<svg class="i" style="left:1301px;top:19px;width:13px;height:13px;color:#222" viewBox="0 0 13 13"><path d="M10.500 3.500A5 5 0 1 0 11.500 8" fill="none" stroke="currentColor" stroke-width="2"/><path d="M12.500 .5V6H7z" fill="currentColor"/></svg>
<div class="t" style="left:1322px;top:18px;font-size:12px;color:#333">Cycle Start</div>
<svg class="i" style="left:1400px;top:18px;width:14px;height:15px;color:#333" viewBox="0 0 14 15"><path d="M3 9L1 6.500c-.5-1 .8-1.700 1.500-1L4 7V2c0-1.200 1.600-1.200 1.600 0v3-4c0-1.200 1.700-1.200 1.700 0v4-3.500C7.300.4 9 .4 9 1.500V6 3c0-1 1.500-1 1.500 0v5.500c0 3-1 5.500-4 5.500-2 0-2.500-1-3.500-5z" fill="#fff" stroke="currentColor" stroke-width=".9"/></svg>
<div class="t" style="left:1424px;top:18px;font-size:12px;color:#333">Feedhold</div>
<div class="a" style="left:1494px;top:11px;width:84px;height:30px;background:#337ab7;border-radius:3px 0 0 3px"></div>
<div class="a" style="left:1578px;top:11px;width:75px;height:30px;background:#5cb85c"></div>
<div class="a" style="left:1653px;top:11px;width:75px;height:30px;background:#f0ad4e"></div>
<div class="a" style="left:1728px;top:11px;width:73px;height:30px;background:#d9534f;border-radius:0 3px 3px 0"></div>
<svg class="i" style="left:1505px;top:20px;width:14px;height:13px;color:#fff"><use href="#home"/></svg>
<div class="t" style="left:1527px;top:18px;font-size:12px;color:#fff">Homing</div>
<svg class="i" style="left:1588px;top:20px;width:17px;height:12px;color:#fff" viewBox="0 0 17 12"><path d="M0 0h1.500v7H17v4.500h-1.500V9H1.500v2.500H0z" fill="currentColor"/><circle cx="4.500" cy="4.300" r="2" fill="currentColor"/><path d="M7 2.500h7.500A2.500 2.500 0 0 1 17 5v1.500H7z" fill="currentColor"/></svg>
<div class="t" style="left:1612px;top:18px;font-size:12px;color:#fff">Sleep</div>
<svg class="i" style="left:1664px;top:19px;width:10px;height:13px;color:#fff" viewBox="0 0 10 13"><path d="M2 6V3.500a2.800 2.800 0 0 1 5.600 0" fill="none" stroke="currentColor" stroke-width="1.500"/><rect y="6" width="9.500" height="7" rx="1" fill="currentColor"/></svg>
<div class="t" style="left:1681px;top:18px;font-size:12px;color:#fff">Unlock</div>
<svg class="i" style="left:1738px;top:19px;width:14px;height:14px;color:#fff"><use href="#undo"/></svg>
<div class="t" style="left:1759px;top:18px;font-size:12px;color:#fff">Reset</div>
<svg class="i" style="left:1829px;top:16px;width:5px;height:16px;color:#a5a5a5" viewBox="0 0 5 16"><path d="M0 0h5v4H0zM0 6h5v4H0zM0 12h5v4H0z" fill="currentColor"/></svg>

<!-- dashed drop border -->
<div class="a" style="left:49px;top:51px;width:1804px;height:4px;background:repeating-linear-gradient(90deg,#fff 0 4px,#28628f 4px 12px)"></div>
<div class="a" style="left:49px;top:936px;width:1804px;height:4px;background:repeating-linear-gradient(90deg,#28628f 0 8px,transparent 8px 12px)"></div>
<div class="a" style="left:49px;top:55px;width:4px;height:881px;background:repeating-linear-gradient(180deg,#fff 0 4px,#28628f 4px 12px)"></div>
<div class="a" style="left:1849px;top:55px;width:4px;height:881px;background:repeating-linear-gradient(180deg,#fff 0 4px,#28628f 4px 12px)"></div>

<!-- drag image -->
<div class="a" style="left:1158px;top:323px;width:104px;height:104px;background:linear-gradient(135deg,rgba(215,238,253,.75),rgba(222,242,255,.55));border:1px solid rgba(190,220,240,.7);border-radius:3px;box-shadow:1px 2px 3px rgba(90,100,110,.55)"></div>
<svg class="a" style="left:1176px;top:332px" width="68" height="87" viewBox="0 0 68 87">
 <defs><linearGradient id="fg" x1="0" y1="0" x2="1" y2="1"><stop offset="0" stop-color="#f6f7f8"/><stop offset="1" stop-color="#e3e5e8"/></linearGradient></defs>
 <path d="M1.500 1.500H48L66.500 20V85H1.500z" fill="url(#fg)" stroke="#a5a5a8"/>
 <path d="M48 1.500V20H66.500z" fill="#fff" stroke="#bbb"/>
 <path d="M14 12h8v46c0 4 2 6 6 6h19v8H26c-8 0-12-5-12-12z" fill="#c45252"/>
 <path d="M29 25h26M51 18v50" stroke="#aaa" stroke-width=".8"/>
 <circle cx="51" cy="25" r="2" fill="none" stroke="#aaa"/>
 <path d="M44 30H33c-3 0-5 2-5 5v15c0 3 2 5 5 5h12v-14H37" fill="none" stroke="#4b5ca8" stroke-width="5"/>
</svg>
<div class="a" style="left:1221px;top:429px;width:55px;height:19px;background:#fff;border:1px solid #777"></div>
<svg class="a" style="left:1226px;top:433px" width="11" height="11"><path d="M0 5.500h10.500M5.250 0v10.500" stroke="#0a3fd0" stroke-width="2.200"/></svg>
<div class="t" style="left:1241px;top:430px;font-size:12px;color:#1e4fe0">Copy</div>

<!-- page scrollbar -->
<div class="a" style="left:1853px;top:0;width:15px;height:940px;background:#f1f1f1"></div>
<div class="a" style="left:1853px;top:16px;width:15px;height:445px;background:#c1c1c1"></div>
<svg class="i" style="left:1857px;top:6px;width:8px;height:6px;color:#bbb"><use href="#up"/></svg>
<svg class="i" style="left:1856px;top:928px;width:9px;height:7px;color:#505050"><use href="#dn"/></svg>
</body></html>
